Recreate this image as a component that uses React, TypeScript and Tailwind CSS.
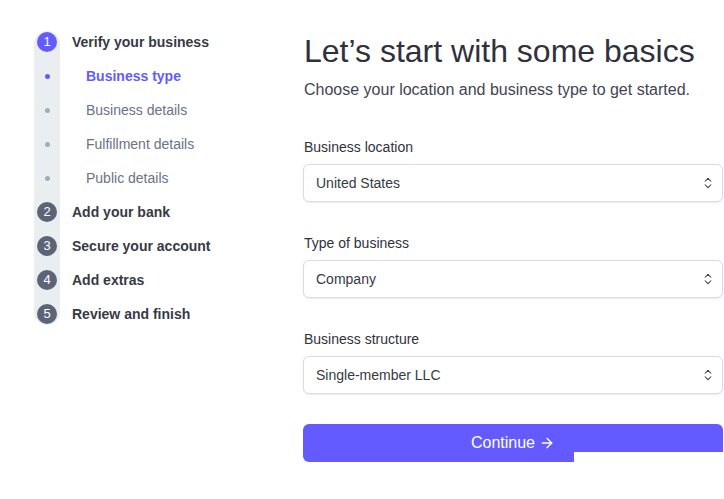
import { ArrowRight, ChevronsUpDown } from "lucide-react";

type Step = {
  label: string;
  kind: "number" | "dot";
  num?: number;
  active?: boolean;
};

const steps: Step[] = [
  { label: "Verify your business", kind: "number", num: 1, active: true },
  { label: "Business type", kind: "dot", active: true },
  { label: "Business details", kind: "dot" },
  { label: "Fulfillment details", kind: "dot" },
  { label: "Public details", kind: "dot" },
  { label: "Add your bank", kind: "number", num: 2 },
  { label: "Secure your account", kind: "number", num: 3 },
  { label: "Add extras", kind: "number", num: 4 },
  { label: "Review and finish", kind: "number", num: 5 },
];

const fields = [
  { label: "Business location", value: "United States" },
  { label: "Type of business", value: "Company" },
  { label: "Business structure", value: "Single-member LLC" },
];

const Sidebar = () => (
  <aside className="flex gap-3 pl-[34px] pt-[31px]">
    <div className="flex w-[26px] flex-col items-center gap-3 rounded-full bg-[#ebeef1]">
      {steps.map((step) => (
        <div key={step.label} className="flex h-[22px] items-center justify-center">
          {step.kind === "number" ? (
            <span
              className={`flex h-5 w-5 items-center justify-center rounded-full text-[13px] text-white ${
                step.active ? "bg-[#635bff]" : "bg-[#5c6577]"
              }`}
            >
              {step.num}
            </span>
          ) : (
            <span
              className={`h-[5px] w-[5px] rounded-full ${
                step.active ? "bg-[#635bff]" : "bg-[#a3acba]"
              }`}
            />
          )}
        </div>
      ))}
    </div>

    <div className="flex flex-col gap-3">
      {steps.map((step) => (
        <div
          key={step.label}
          className={`flex h-[22px] items-center text-sm ${
            step.kind === "dot" ? "pl-[14px]" : ""
          } ${
            step.kind === "number"
              ? "font-bold text-[#353a44]"
              : step.active
                ? "font-bold text-[#635bff]"
                : "text-[#687385]"
          }`}
        >
          {step.label}
        </div>
      ))}
    </div>
  </aside>
);

const App = () => {
  return (
    <main className="flex min-h-screen bg-white font-['Liberation_Sans',Arial,sans-serif]">
      <div className="w-[303px] shrink-0">
        <Sidebar />
      </div>

      <section className="w-[420px] pt-[31px]">
        <h1 className="pl-px text-[32px] leading-10 text-[#30313d]">
          Let’s start with some basics
        </h1>
        <p className="mt-[7px] pl-px text-base leading-6 text-[#414552]">
          Choose your location and business type to get started.
        </p>

        <div className="mt-[35px] flex flex-col gap-[31px]">
          {fields.map((field) => (
            <div key={field.label}>
              <label className="block pl-px text-sm leading-5 text-[#30313d]">
                {field.label}
              </label>
              <div className="mt-[7px] flex h-[38px] items-center justify-between rounded-md border border-[#d8dee4] bg-white pl-3 pr-[7px] shadow-[0_1px_2px_rgba(0,0,0,0.08)]">
                <span className="text-sm text-[#353a44]">{field.value}</span>
                <ChevronsUpDown size={14} strokeWidth={1.75} className="text-[#353a44]" />
              </div>
            </div>
          ))}
        </div>

        <div className="relative mt-[30px]">
          <button
            type="button"
            className="flex h-[38px] w-full items-center justify-center gap-1 rounded-md bg-[#635bff] text-base text-white"
          >
            Continue
            <ArrowRight size={16} strokeWidth={2} />
          </button>
          <div className="absolute left-[271px] right-0 top-[28px] h-[12px] bg-white" />
        </div>
      </section>
    </main>
  );
};

export default App;
